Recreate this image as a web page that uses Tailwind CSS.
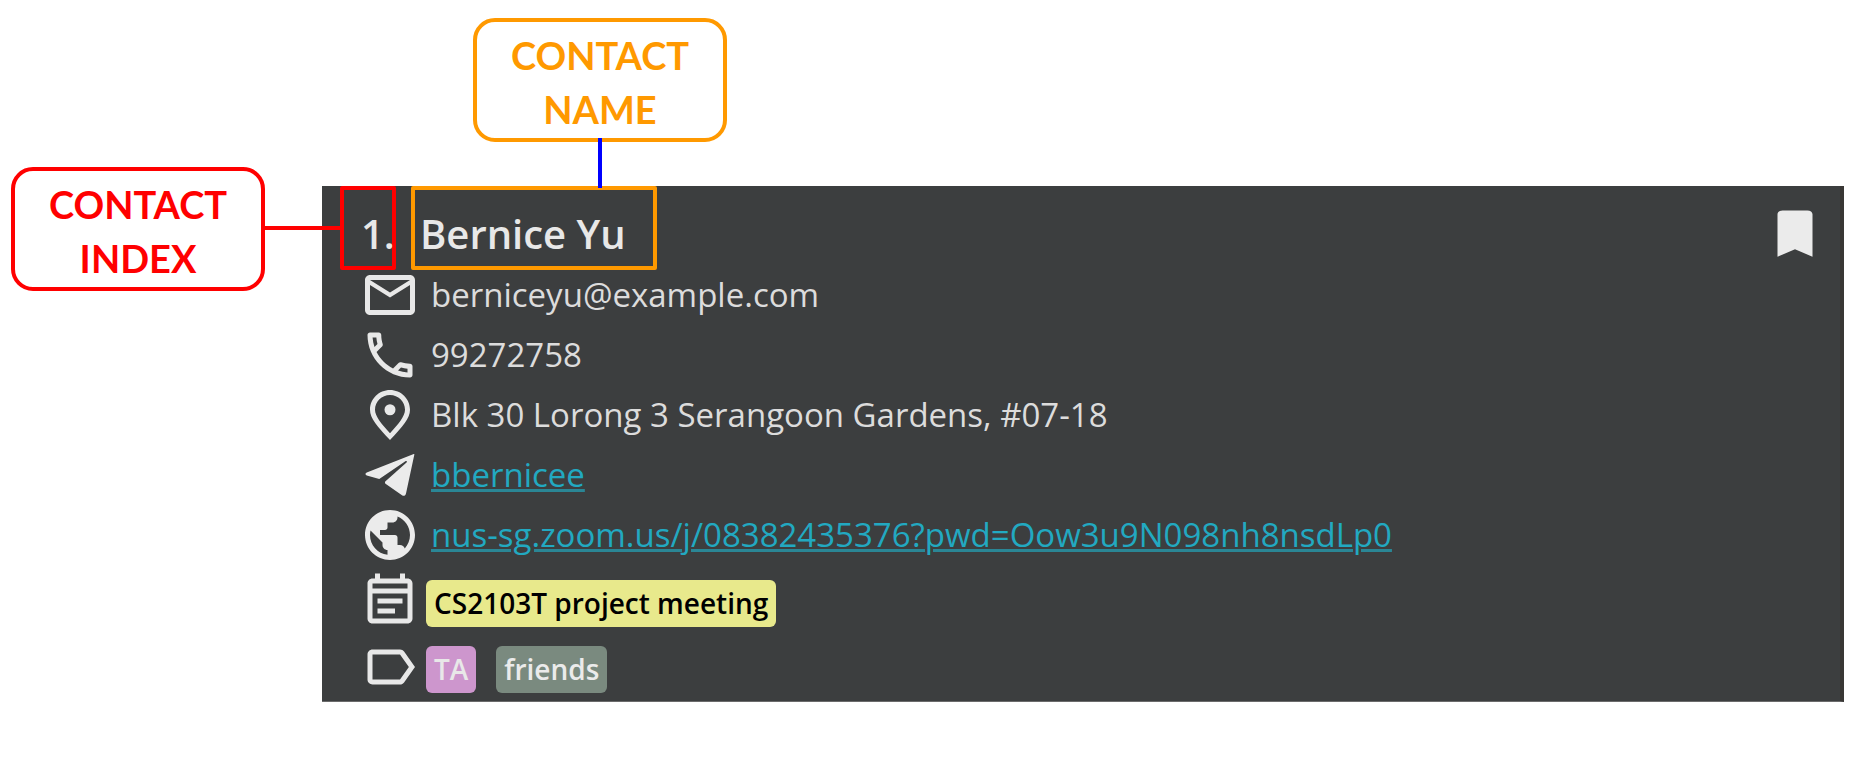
<!DOCTYPE html>
<html lang="en">
<head>
<meta charset="utf-8">
<meta name="viewport" content="width=device-width, initial-scale=1">
<title>Contact card</title>
<script src="https://cdn.jsdelivr.net/npm/@tailwindcss/browser@4"></script>
</head>
<body class="bg-white font-['Open_Sans',sans-serif]">
<main class="pt-[18px] pr-8">
  <!-- Callout above the card -->
  <div class="ml-[473px] flex w-[254px] flex-col items-center">
    <div class="w-full rounded-[22px] border-4 border-[#ff9900] pt-1.5 pb-0.5 text-center font-['Lato',sans-serif] text-[38px] leading-[54px] font-bold text-[#ff9900]">CONTACT<br>NAME</div>
    <div class="relative z-10 -mt-1 -mb-0.5 h-[50px] w-1 bg-[#0000ff]"></div>
  </div>

  <div class="flex items-start">
    <!-- Callout left of the card -->
    <div class="relative z-10 -mt-[19px] ml-[11px] w-[311px] shrink-0">
      <div class="w-[254px] rounded-[22px] border-4 border-[#ff0000] pt-1.5 pb-0.5 text-center font-['Lato',sans-serif] text-[38px] leading-[54px] font-bold text-[#ff0000]">CONTACT<br>INDEX</div>
      <div class="absolute top-[59px] left-[253px] h-1 w-[77px] bg-[#ff0000]"></div>
    </div>

    <article class="min-w-0 flex-1 border-r-4 border-b border-r-[#393735] border-b-[#6b6b6b] bg-[#3c3e3f] pb-1 pl-[18px] text-[#e8e8e8]">
      <header class="flex items-start">
        <div class="h-[84px] w-14 rounded-xs border-4 border-[#ff0000] pt-[17px] pl-[17px] text-[40px] leading-[54px] font-semibold">1.</div>
        <h1 class="ml-[15px] h-[84px] w-[246px] rounded-xs border-4 border-[#ff9900] pt-[17px] pl-[5px] text-[40px] leading-[54px] font-semibold whitespace-nowrap">Bernice Yu</h1>
        <button type="button" aria-label="Bookmark" class="mt-[17px] mr-[15px] ml-auto">
          <svg class="size-[60px]" viewBox="0 0 24 24" fill="#ebebeb"><path d="M17 3H7c-1.100 0-2 .6-2 1.500V21.500l7-3 7 3V4.500C19 3.600 18.100 3 17 3z"/></svg>
        </button>
      </header>

      <ul class="-mt-[5px] ml-[20px] text-[33px] leading-[60px] text-[#dcdcdc]">
        <li class="flex gap-[11px]">
          <svg class="size-[60px] shrink-0" viewBox="0 0 24 24" fill="#e8e8e8"><path d="M22 6c0-1.100-.9-2-2-2H4c-1.100 0-2 .9-2 2v12c0 1.100.9 2 2 2h16c1.100 0 2-.9 2-2V6zm-2 0-8 5-8-5h16zm0 12H4V8l8 5 8-5v10z"/></svg>
          <span>berniceyu@example.com</span>
        </li>
        <li class="flex gap-[11px]">
          <svg class="size-[60px] shrink-0" viewBox="0 0 24 24" fill="#e8e8e8"><path d="M6.540 5c.06.890.21 1.760.45 2.590l-1.200 1.200c-.41-1.200-.67-2.470-.76-3.790h1.510m9.860 12.020c.85.240 1.720.39 2.600.45v1.490c-1.320-.09-2.590-.35-3.800-.75l1.200-1.190M7.500 3H4c-.55 0-1 .45-1 1 0 9.390 7.610 17 17 17 .55 0 1-.45 1-1v-3.490c0-.55-.45-1-1-1-1.240 0-2.450-.2-3.570-.57-.1-.04-.21-.05-.31-.05-.26 0-.51.1-.71.290l-2.200 2.200c-2.830-1.450-5.150-3.760-6.590-6.590l2.200-2.200c.28-.28.36-.67.25-1.020C8.700 6.450 8.500 5.250 8.500 4c0-.55-.45-1-1-1z"/></svg>
          <span>99272758</span>
        </li>
        <li class="flex gap-[11px]">
          <svg class="size-[60px] shrink-0" viewBox="0 0 24 24" fill="#e8e8e8"><path d="M12 2C7.600 2 4 5.500 4 9.900c0 3.500 2.900 6.700 8 12.100 5.100-5.400 8-8.600 8-12.100C20 5.500 16.400 2 12 2zm0 17.300C8.600 15.600 6 12.500 6 9.900 6 6.600 8.700 4 12 4s6 2.600 6 5.900c0 2.600-2.600 5.700-6 9.400z"/><circle cx="12" cy="9.900" r="2.200"/></svg>
          <span>Blk 30 Lorong 3 Serangoon Gardens, #07-18</span>
        </li>
        <li class="flex gap-[11px]">
          <svg class="size-[60px] shrink-0" viewBox="0 0 24 24" fill="#ebebeb"><path d="M21.500 3.600 2.700 11c-.7.300-.7.900 0 1.200L7.700 13.600 18 6.600c.8-.5 1 .1.500.5L10.200 14.500c-.3.300-.3.700 0 1L16.800 20.100c.7.500 1.400.2 1.600-.7L21.700 4c.1-.4 0-.5-.2-.4z"/></svg>
          <a href="#telegram" class="text-[#22a9c1] underline decoration-[#2a8695] decoration-3 underline-offset-2">bbernicee</a>
        </li>
        <li class="flex gap-[11px]">
          <svg class="size-[60px] shrink-0" viewBox="0 0 24 24" fill="#ebebeb"><path d="M12 2C6.480 2 2 6.480 2 12s4.480 10 10 10 10-4.480 10-10S17.520 2 12 2zm-1 17.930c-3.950-.49-7-3.850-7-7.930 0-.62.08-1.210.21-1.790L9 15v1c0 1.100.9 2 2 2v1.930zm6.900-2.540c-.26-.81-1-1.390-1.900-1.390h-1v-3c0-.55-.45-1-1-1H8v-2h2c.55 0 1-.45 1-1V7h2c1.100 0 2-.9 2-2v-.41c2.930 1.190 5 4.060 5 7.410 0 2.080-.8 3.970-2.100 5.390z"/></svg>
          <a href="#zoom" class="text-[#22a9c1] underline decoration-[#2a8695] decoration-3 underline-offset-2">nus-sg.zoom.us/j/08382435376?pwd=Oow3u9N098nh8nsdLp0</a>
        </li>
        <li class="mt-[6px] flex items-center gap-[6px]">
          <svg class="size-[60px] shrink-0" viewBox="0 0 24 24" fill="#e8e8e8"><path d="M19 3h-1V1h-2v2H8V1H6v2H5c-1.110 0-2 .9-2 2v14c0 1.100.89 2 2 2h14c1.100 0 2-.9 2-2V5c0-1.100-.9-2-2-2zm0 16H5V9h14v10zm0-12H5V5h14v2zM7 11h10v2H7zm0 4h7v2H7z"/></svg>
          <span class="mt-1 rounded-md bg-[#e8e98c] px-2 text-[28px] leading-[47px] font-semibold text-black">CS2103T project meeting</span>
        </li>
        <li class="mt-[6px] flex items-center gap-[6px]">
          <svg class="size-[60px] shrink-0" viewBox="0 0 24 24" fill="#e8e8e8"><path d="M17.630 5.840C17.270 5.330 16.670 5 16 5L5 5.010C3.900 5.010 3 5.900 3 7v10c0 1.100.9 1.990 2 1.990L16 19c.67 0 1.270-.33 1.630-.84L22 12l-4.370-6.160zM16 17H5V7h11l3.550 5L16 17z"/></svg>
          <span class="mt-1 rounded-md bg-[#cd96cd] px-2 text-[28px] leading-[47px] font-semibold text-[#e8e8e8]">TA</span>
          <span class="mt-1 ml-[14px] rounded-md bg-[#7a8a7f] px-2 text-[28px] leading-[47px] font-semibold text-[#ebebeb]">friends</span>
        </li>
      </ul>
    </article>
  </div>
</main>
</body>
</html>
